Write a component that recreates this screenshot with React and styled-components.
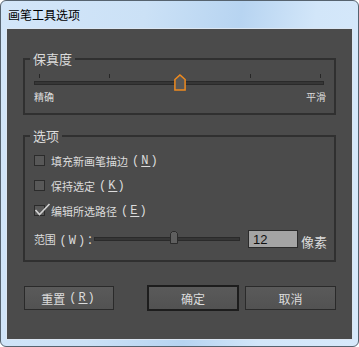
import React from "react";
import styled, { createGlobalStyle } from "styled-components";

const Global = createGlobalStyle`
  html, body { margin: 0; padding: 0; background: #ffffff; }
  body {
    width: 359px; height: 347px; overflow: hidden;
    font-family: "Noto Sans CJK SC", "Noto Sans", sans-serif;
  }
`;

const CJK = `"Noto Sans CJK SC", "Noto Sans", sans-serif`;

const Window = styled.div`
  box-sizing: border-box;
  width: 359px;
  height: 347px;
  border: 1px solid #56636f;
  border-radius: 6px;
  background: linear-gradient(100deg, #d3e6f9 0%, #cbe1f6 35%, #b7d4f1 58%, #d2e6f9 76%, #d7e9fb 100%);
  display: flex;
  flex-direction: column;
  padding: 0 5px 6px;
  overflow: hidden;
`;

const TitleBar = styled.div`
  height: 27px;
  display: flex;
  align-items: center;
  padding-left: 2px;
  font-family: ${CJK};
  font-size: 12px;
  color: #000;
`;

const Content = styled.div`
  flex: 1;
  border: 1px solid #dbe6f2;
  background: #4b4b4b;
  padding: 23px 16px 0;
  display: flex;
  flex-direction: column;
  color: #dcdcdc;
  font-family: ${CJK};
`;

const Group = styled.fieldset`
  margin: ${(p) => p.$mt || 0}px 0 0;
  border: 2px solid #303030;
  padding: ${(p) => p.$pt}px 10px ${(p) => p.$pb}px 9px;
  min-width: 0;
`;

const Legend = styled.legend`
  font-size: 13px;
  line-height: 14px;
  color: #dcdcdc;
  padding: 0 3px;
  margin-left: -4px;
`;

const SliderBox = styled.div`
  position: relative;
  width: ${(p) => p.$w}px;
  height: ${(p) => p.$h}px;
  margin-top: ${(p) => p.$mt || 0}px;
  align-self: ${(p) => (p.$top ? "flex-start" : "auto")};
  flex: none;
`;

const Ticks = styled.div`
  display: flex;
  justify-content: space-between;
  padding: 0 3px 0 5px;
  margin-top: 2px;
  height: 4px;
`;

const Tick = styled.span`
  width: 1px;
  height: 4px;
  background: #262626;
`;

const Track = styled.div`
  box-sizing: border-box;
  height: 4px;
  margin-top: ${(p) => p.$mt}px;
  border: 1px solid #2a2a2a;
  background: #363636;
`;

const Thumb = styled.svg`
  position: absolute;
  top: ${(p) => p.$top}px;
  left: ${(p) => p.$left}px;
`;

const EndLabels = styled.div`
  display: flex;
  justify-content: space-between;
  margin-right: -2px;
  font-size: 10px;
  line-height: 10px;
  height: 10px;
`;

const CheckRow = styled.label`
  display: flex;
  align-items: center;
  height: 25px;
  font-size: 11px;
  color: #dcdcdc;
  white-space: nowrap;
`;

const Box = styled.span`
  position: relative;
  box-sizing: border-box;
  width: 11px;
  height: 11px;
  border: 1px solid #2b2b2b;
  background: #585858;
  margin-right: 6px;
  flex: none;
`;

const CheckMark = styled.svg`
  position: absolute;
  left: -1px;
  top: -3px;
  overflow: visible;
`;

const Mn = styled.span`
  font-family: "Liberation Mono", monospace;
  font-size: 12px;
  letter-spacing: 2px;
  margin-left: 4px;
  & u {
    text-underline-offset: 2px;
  }
`;

const RangeRow = styled.div`
  display: flex;
  align-items: center;
  height: 22px;
  margin-top: 5px;
`;

const RangeLabel = styled.span`
  width: 60px;
  flex: none;
  font-size: 11px;
  white-space: nowrap;
  letter-spacing: -0.2px;
`;

const ValueInput = styled.input`
  box-sizing: border-box;
  flex: none;
  width: 50px;
  height: 18px;
  margin: 0 0 0 8px;
  padding: 0 0 0 4px;
  border: 1px solid #2b2b2b;
  background: #a4a4a4;
  color: #111;
  font-family: "Liberation Sans", sans-serif;
  font-size: 13px;
  outline: none;
`;

const Unit = styled.span`
  flex: none;
  white-space: nowrap;
  align-self: flex-end;
  margin-left: 3px;
  margin-right: -4px;
  font-size: 13px;
  line-height: 16px;
`;

const ButtonRow = styled.div`
  display: flex;
  align-items: center;
  height: 26px;
  margin-top: 23px;
  padding-left: 1px;
`;

const Btn = styled.button`
  box-sizing: border-box;
  width: ${(p) => p.$w}px;
  height: ${(p) => (p.$primary ? 26 : 24)}px;
  margin-left: ${(p) => p.$ml || 0}px;
  border: ${(p) => (p.$primary ? "2px solid #1d1d1d" : "1px solid #2a2a2a")};
  background: linear-gradient(#5a5a5a, #525252);
  color: #dcdcdc;
  font-family: ${CJK};
  font-size: 12px;
  padding: 0;
  display: flex;
  align-items: center;
  justify-content: center;
  white-space: nowrap;
`;

function Check({ checked }) {
  return (
    <Box>
      {checked && (
        <CheckMark width="16" height="14" viewBox="0 0 16 14">
          <polyline points="1.5,7 5.5,11.5 15.5,1" fill="none" stroke="#d2d2d2" strokeWidth="1.6" />
        </CheckMark>
      )}
    </Box>
  );
}

export default function App() {
  return (
    <>
      <Global />
      <Window>
        <TitleBar>画笔工具选项</TitleBar>
        <Content>
          <Group $pt={6} $pb={11}>
            <Legend>保真度</Legend>
            <SliderBox $w={290} $h={18}>
              <Ticks>
                {[0, 1, 2, 3, 4].map((i) => (
                  <Tick key={i} />
                ))}
              </Ticks>
              <Track $mt={3} />
              <Thumb $top={0} $left={140} width="12" height="17" viewBox="0 0 12 17">
                <polygon points="0.9,5.5 6,0.9 11.1,5.5 11.1,16.1 0.9,16.1" fill="#575757" stroke="#ee8a1f" strokeWidth="1.5" />
              </Thumb>
            </SliderBox>
            <EndLabels>
              <span>精确</span>
              <span>平滑</span>
            </EndLabels>
          </Group>

          <Group $mt={14} $pt={5} $pb={10}>
            <Legend>选项</Legend>
            <CheckRow>
              <Check />
              填充新画笔描边<Mn>(<u>N</u>)</Mn>
            </CheckRow>
            <CheckRow>
              <Check />
              保持选定<Mn>(<u>K</u>)</Mn>
            </CheckRow>
            <CheckRow>
              <Check checked />
              编辑所选路径<Mn>(<u>E</u>)</Mn>
            </CheckRow>
            <RangeRow>
              <RangeLabel>
                范围<Mn>(W)</Mn>：
              </RangeLabel>
              <SliderBox $w={146} $h={13} $mt={3} $top>
                <Track $mt={6} />
                <Thumb $top={0} $left={76} width="8" height="13" viewBox="0 0 8 13">
                  <path d="M2.5,0.5 H5.5 L7.5,2.5 V12.5 H0.5 V2.5 Z" fill="#5f5f5f" stroke="#2b2b2b" strokeWidth="1" />
                </Thumb>
              </SliderBox>
              <ValueInput readOnly value="12" />
              <Unit>像素</Unit>
            </RangeRow>
          </Group>

          <ButtonRow>
            <Btn $w={90}>
              重置<Mn>(<u>R</u>)</Mn>
            </Btn>
            <Btn $w={92} $ml={33} $primary>
              确定
            </Btn>
            <Btn $w={91} $ml={6}>
              取消
            </Btn>
          </ButtonRow>
        </Content>
      </Window>
    </>
  );
}
